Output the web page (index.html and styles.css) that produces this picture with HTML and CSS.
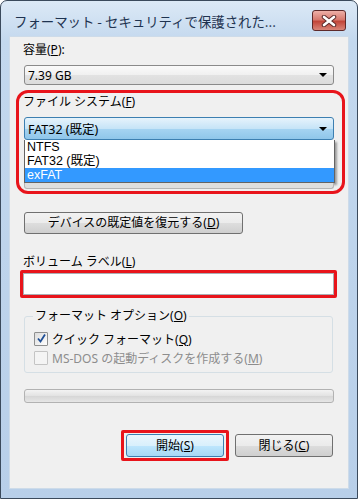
FILE: index.html
```html
<!DOCTYPE html>
<html lang="ja">
<head>
    <meta charset="UTF-8">
    <meta name="viewport" content="width=device-width, initial-scale=1.0">
    <title>フォーマット</title>
    <link rel="stylesheet" href="styles.css">
</head>
<body>
    <div class="window">
        <div class="titlebar">
            <span class="title">フォーマット - セキュリティで保護された...</span>
            <span class="close">
                <svg width="16" height="12" viewBox="0 0 16 12">
                    <path d="M3 2 L13 10 M13 2 L3 10" stroke="#5b2a2a" stroke-width="4.5" stroke-linecap="round"/>
                    <path d="M3 2 L13 10 M13 2 L3 10" stroke="#fff" stroke-width="2.6" stroke-linecap="round"/>
                </svg>
            </span>
        </div>

        <div class="client">
            <div class="label first">容量(<u>P</u>):</div>
            <div class="combo">
                <span>7.39 GB</span>
                <span class="arrow"></span>
            </div>

            <div class="mark-box">
                <div class="label">ファイル システム(<u>F</u>)</div>
                <div class="combo focused">
                    <span>FAT32 (既定)</span>
                    <span class="arrow"></span>
                </div>
                <div class="list">
                    <div class="item">NTFS</div>
                    <div class="item">FAT32 (既定)</div>
                    <div class="item selected">exFAT</div>
                </div>
                <div class="under"></div>
            </div>

            <button class="btn restore">デバイスの既定値を復元する(<u>D</u>)</button>

            <div class="label volume">ボリューム ラベル(<u>L</u>)</div>
            <div class="mark-input">
                <input type="text" class="text-input">
            </div>

            <fieldset class="group">
                <legend>フォーマット オプション(<u>O</u>)</legend>
                <div class="check">
                    <span class="box">
                        <svg width="11" height="11" viewBox="0 0 11 11">
                            <path d="M2 5.5 L4.5 8.5 L9 1.5" fill="none" stroke="#1f4f96" stroke-width="1.8"/>
                        </svg>
                    </span>
                    <span>クイック フォーマット(<u>Q</u>)</span>
                </div>
                <div class="check disabled">
                    <span class="box"></span>
                    <span>MS-DOS の起動ディスクを作成する(<u>M</u>)</span>
                </div>
            </fieldset>

            <div class="progress"></div>

            <div class="actions">
                <div class="mark-btn">
                    <button class="btn default">開始(<u>S</u>)</button>
                </div>
                <button class="btn">閉じる(<u>C</u>)</button>
            </div>
        </div>
    </div>
</body>
</html>
```

FILE: styles.css
```css
body{
    margin: 0;
    padding: 0;
    background-color: #fff;
    font-family: "Noto Sans", "Noto Sans CJK JP", sans-serif;
    font-size: 12px;
    color: #000;
}
u{
    text-decoration: underline;
    text-underline-offset: 1px;
}
.window{
    box-sizing: border-box;
    width: 358px;
    height: 499px;
    border: 1px solid #3b4a5c;
    border-radius: 7px 7px 0 0;
    background: linear-gradient(#dce9f6, #c3d8ee 40px, #b8cfe9);
    padding: 0 8px 9px 8px;
    display: flex;
    flex-direction: column;
}
.titlebar{
    height: 35px;
    display: flex;
    align-items: center;
    justify-content: space-between;
}
.title{
    font-family: "Noto Sans CJK JP", sans-serif;
    font-size: 13.4px;
    color: #1e3350;
    padding-left: 5px;
    padding-top: 5px;
}
.close{
    width: 32px;
    height: 19px;
    margin-right: 3px;
    margin-top: 4px;
    border: 1px solid #5e2a2a;
    border-radius: 3px;
    background: linear-gradient(#eeb0a8, #d77a6f 45%, #c2463a 55%, #d98579);
    display: flex;
    align-items: center;
    justify-content: center;
}
.client{
    flex: 1;
    background-color: #f0f0f0;
    border: 1px solid #cddbe9;
    padding-top: 5px;
}
.label{
    line-height: 16px;
    padding-left: 13px;
}
.combo{
    box-sizing: border-box;
    width: 310px;
    height: 20px;
    margin: 7px 0 0 14px;
    border: 1px solid #8a8a8a;
    border-radius: 3px;
    background: linear-gradient(#fafafa, #f0f0f0 50%, #e2e2e2 51%, #dcdcdc);
    display: flex;
    align-items: center;
    justify-content: space-between;
    padding: 0 6px 0 3px;
}
.arrow{
    width: 0;
    height: 0;
    border-left: 4px solid transparent;
    border-right: 4px solid transparent;
    border-top: 4px solid #000;
}
.mark-box{
    margin: 5px 3px 0 6px;
    border: 3px solid #e8141b;
    border-radius: 12px;
    padding: 1px 0 2px 0;
}
.mark-box .label{
    padding-left: 4px;
}
.combo.focused{
    height: 23px;
    margin: 7px 0 0 5px;
    border-color: #3c7fb1;
    background: linear-gradient(#e6f3fc, #c6e4f7 50%, #a6d4f2 51%, #8fc6ea);
    font-size: 12.5px;
}
.list{
    box-sizing: border-box;
    width: 311px;
    margin-left: 5px;
    background-color: #fff;
    border: 1px solid #646464;
    border-top: none;
    box-shadow: 2px 2px 2px rgba(0,0,0,0.35);
    font-family: "Liberation Sans", "Noto Sans CJK JP", sans-serif;
    font-size: 12.5px;
}
.item{
    height: 14px;
    line-height: 14px;
    padding-left: 2px;
}
.item.selected{
    background-color: #3399ff;
    color: #fff;
}
.under{
    width: 308px;
    height: 5px;
    margin: 0 0 0 5px;
    border: 1px solid #b5b5b5;
    border-top: none;
    border-radius: 0 0 3px 3px;
    background: #dedede;
}
.btn{
    box-sizing: border-box;
    height: 23px;
    border: 1px solid #707070;
    border-radius: 3px;
    background: linear-gradient(#f2f2f2, #ebebeb 50%, #dddddd 51%, #cfcfcf);
    font-family: "Noto Sans", "Noto Sans CJK JP", sans-serif;
    font-size: 12px;
    color: #000;
    padding: 0;
    line-height: 20px;
}
.restore{
    display: block;
    width: 219px;
    height: 22px;
    margin: 18px 0 0 14px;
}
.label.volume{
    margin-top: 20px;
}
.mark-input{
    box-sizing: border-box;
    width: 317px;
    height: 28px;
    margin-left: 10px;
    border: 3px solid #e8141b;
    border-radius: 2px;
    background-color: #fff;
}
.text-input{
    box-sizing: border-box;
    width: 100%;
    height: 100%;
    border: 1px solid #abadb3;
    outline: none;
    background-color: #fff;
}
.group{
    width: 309px;
    box-sizing: border-box;
    margin: 10px 0 0 14px;
    padding: 5px 8px 5px 9px;
    border: 1px solid #d5dfe5;
    border-radius: 3px;
}
.group legend{
    padding: 0 2px;
    margin-left: -1px;
    line-height: 16px;
}
.check{
    display: flex;
    align-items: center;
    gap: 4px;
    height: 19px;
}
.box{
    box-sizing: border-box;
    width: 14px;
    height: 14px;
    border: 1px solid #8e8f8f;
    border-radius: 1px;
    background: linear-gradient(135deg, #dcdcdc, #fefefe);
    display: flex;
    align-items: center;
    justify-content: center;
}
.check.disabled{
    color: #8d8d8d;
}
.check.disabled .box{
    border-color: #c4c4c4;
    background: #f4f4f4;
}
.progress{
    box-sizing: border-box;
    width: 310px;
    height: 14px;
    margin: 16px 0 0 14px;
    border: 1px solid #b2b2b2;
    border-radius: 3px;
    background: linear-gradient(#f3f3f3, #e2e2e2 50%, #d6d6d6 51%, #e6e6e6);
}
.actions{
    display: flex;
    justify-content: flex-end;
    align-items: center;
    gap: 6px;
    margin-top: 27px;
    padding-right: 15px;
}
.mark-btn{
    border: 3px solid #e8141b;
    border-radius: 2px;
    padding: 1px 2px;
}
.actions .btn{
    width: 98px;
}
.btn.default{
    border-color: #3c7fb1;
    background: linear-gradient(#eaf6fd, #d9f0fc 50%, #bee6fd 51%, #a7d9f5);
}
```
